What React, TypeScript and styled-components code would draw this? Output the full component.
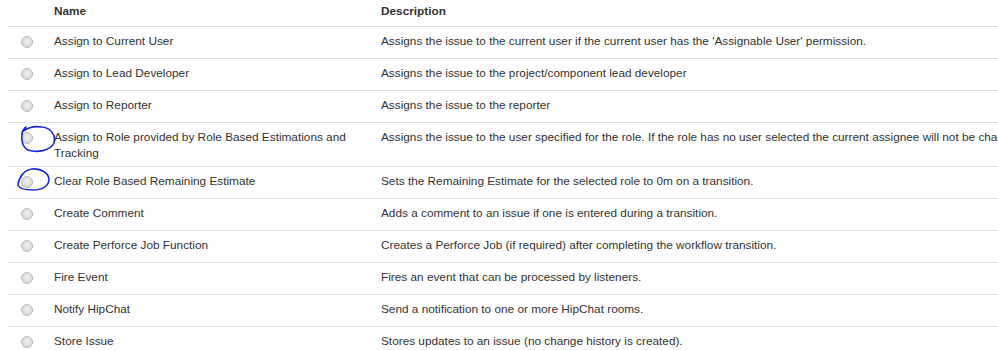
import styled, { createGlobalStyle } from "styled-components";

const GlobalStyle = createGlobalStyle`
  html, body {
    margin: 0;
    padding: 0;
    background: #ffffff;
    overflow: hidden;
  }
  body {
    padding-left: 8px;
    font-family: "Liberation Sans", Arial, sans-serif;
    color: #333333;
  }
`;

const Wrapper = styled.div`
  position: relative;
  width: 1400px;
`;

const Table = styled.table`
  border-collapse: collapse;
  table-layout: fixed;
  width: 1400px;
  font-size: 11.8px;
  line-height: 16px;
`;

const HeadCell = styled.th<{ $w?: number }>`
  width: ${(p) => (p.$w ? `${p.$w}px` : "auto")};
  height: 26px;
  padding: 3px 10px 6px 9px;
  text-align: left;
  vertical-align: middle;
  font-weight: bold;
  color: #333333;
  border-bottom: 1px solid #dcdcdc;
  box-sizing: border-box;
`;

const Row = styled.tr`
  border-bottom: 1px solid #dcdcdc;
`;

const RadioCell = styled.td`
  height: 32px;
  padding: 9px 0 0 0;
  vertical-align: top;
  box-sizing: border-box;
`;

const Cell = styled.td<{ $nowrap?: boolean }>`
  height: 32px;
  padding: 6px 10px 5px 9px;
  vertical-align: top;
  white-space: ${(p) => (p.$nowrap ? "nowrap" : "normal")};
  box-sizing: border-box;
`;

const Radio = styled.input.attrs({ type: "radio" })`
  appearance: none;
  display: block;
  margin: 0 0 0 13px;
  width: 12px;
  height: 12px;
  border-radius: 50%;
  border: 1px solid #bdbdbd;
  background: radial-gradient(circle at 50% 40%, #efefef 0%, #dedede 55%, #cfcfcf 100%);
  box-sizing: border-box;
`;

const Ink = styled.svg`
  position: absolute;
  left: 0;
  top: 0;
  pointer-events: none;
  overflow: visible;
`;

type Action = { name: string; description: string };

const actions: Action[] = [
  {
    name: "Assign to Current User",
    description:
      "Assigns the issue to the current user if the current user has the 'Assignable User' permission.",
  },
  {
    name: "Assign to Lead Developer",
    description: "Assigns the issue to the project/component lead developer",
  },
  { name: "Assign to Reporter", description: "Assigns the issue to the reporter" },
  {
    name: "Assign to Role provided by Role Based Estimations and Tracking",
    description:
      "Assigns the issue to the user specified for the role. If the role has no user selected the current assignee will not be changed.",
  },
  {
    name: "Clear Role Based Remaining Estimate",
    description: "Sets the Remaining Estimate for the selected role to 0m on a transition.",
  },
  {
    name: "Create Comment",
    description: "Adds a comment to an issue if one is entered during a transition.",
  },
  {
    name: "Create Perforce Job Function",
    description: "Creates a Perforce Job (if required) after completing the workflow transition.",
  },
  { name: "Fire Event", description: "Fires an event that can be processed by listeners." },
  { name: "Notify HipChat", description: "Send a notification to one or more HipChat rooms." },
  {
    name: "Store Issue",
    description: "Stores updates to an issue (no change history is created).",
  },
];

export default function App() {
  return (
    <Wrapper>
      <GlobalStyle />
      <Table>
        <thead>
          <tr>
            <HeadCell $w={37} />
            <HeadCell $w={327}>Name</HeadCell>
            <HeadCell>Description</HeadCell>
          </tr>
        </thead>
        <tbody>
          {actions.map((a) => (
            <Row key={a.name}>
              <RadioCell>
                <Radio name="function" disabled />
              </RadioCell>
              <Cell>{a.name}</Cell>
              <Cell $nowrap>{a.description}</Cell>
            </Row>
          ))}
        </tbody>
      </Table>
      <Ink width="60" height="200" viewBox="0 0 60 200">
        <path
          d="M18 127 C 12 131, 12 146, 20 150 C 29 153, 42 151, 46 143 C 48 135, 43 128, 34 127 C 27 126, 19 128, 14 132"
          fill="none"
          stroke="#1528e0"
          strokeWidth="1.6"
          strokeLinecap="round"
        />
        <path
          d="M10 185 C 11 177, 16 170, 24 169 C 33 168, 41 173, 41 180 C 40 187, 33 190, 24 190 C 17 190, 12 189, 10 185"
          fill="none"
          stroke="#1528e0"
          strokeWidth="1.6"
          strokeLinecap="round"
        />
      </Ink>
    </Wrapper>
  );
}
